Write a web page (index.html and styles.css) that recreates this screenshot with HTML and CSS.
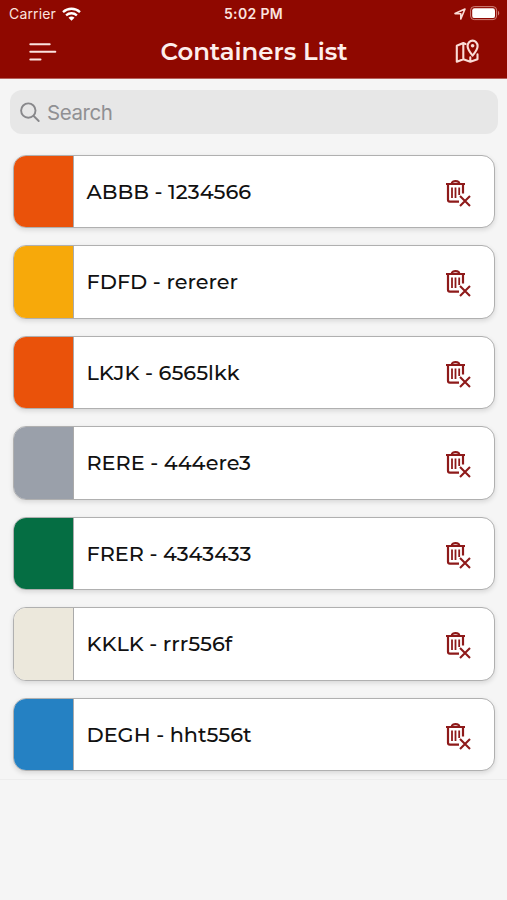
FILE: index.html
```html
<!DOCTYPE html>
<html lang="en">
<head>
    <meta charset="UTF-8">
    <meta name="viewport" content="width=device-width, initial-scale=1.0">
    <title>Containers List</title>
    <link rel="stylesheet" href="styles.css">
</head>
<body>
    <svg class="sprite" width="0" height="0">
        <symbol id="trash" viewBox="0 0 26 28">
            <g fill="none" stroke="#8e1a1a">
                <path stroke-width="2.2" d="M1 5h19M6.8 4.5c0-3.2 7.4-3.2 7.4 0M3 5v15.8c0 1.2.6 1.8 1.8 1.8h9.2M18 5v9.5"/>
                <path stroke-width="1.8" d="M7 8.5v10.5M10.5 8.5v10.5M14.2 8.5v7.5"/>
                <path stroke-width="2.1" d="M15 17l10 10M25 17l-10 10"/>
            </g>
        </symbol>
    </svg>

    <header class="header">
        <div class="status">
            <div class="status-left">
                <span class="carrier">Carrier</span>
                <svg width="19" height="14" viewBox="0 0 19 14">
                    <g fill="none" stroke="#fff" stroke-width="2.3">
                        <path d="M1 5.2c4.8-4.6 12.2-4.6 17 0"/>
                        <path d="M4.1 8.4c3.1-2.9 7.7-2.9 10.8 0"/>
                    </g>
                    <path fill="#fff" d="M9.5 13.8L6.5 10.7c1.7-1.6 4.3-1.6 6 0z"/>
                </svg>
            </div>
            <span class="time">5:02 PM</span>
            <div class="status-right">
                <svg width="12" height="12" viewBox="0 0 12 12">
                    <path fill="none" stroke="#fbdcd6" stroke-width="1.6" stroke-linejoin="round" d="M1 5.6L11 1L6.8 11V5.7z"/>
                </svg>
                <svg width="30" height="15" viewBox="0 0 30 15">
                    <rect x=".6" y=".6" width="26" height="13" rx="3.6" fill="none" stroke="#d08078"/>
                    <rect x="2.2" y="2.3" width="22.8" height="9.8" rx="2.2" fill="#fff"/>
                    <path fill="#d08078" d="M28 4.8c1.7.8 1.7 4 0 4.8z"/>
                </svg>
            </div>
        </div>
        <div class="navbar">
            <svg width="28" height="20" viewBox="0 0 28 20">
                <path stroke="#fbe3df" stroke-width="2" stroke-linecap="round" d="M1.3 2.2h19.4M1.3 9.8h25M1.3 17.4h10.2"/>
            </svg>
            <h1>Containers List</h1>
            <svg width="25" height="25" viewBox="0 0 25 25">
                <g fill="none" stroke="#fbdcd6" stroke-width="2.1" stroke-linejoin="round" stroke-linecap="round">
                    <path d="M10.5 5L8.3 4L1.8 6.8v16l6.5-2.6l7 2.6l7.2-2.6V15.4M8.3 4v16.2M15.3 18.4v4"/>
                    <path d="M17.6 16.6c-2.4-3.2-5-5.8-5-9.6a5 5.4 0 0 1 10 0c0 3.8-2.6 6.4-5 9.6z"/>
                </g>
                <circle cx="17.6" cy="6.8" r="1.8" fill="#fbdcd6"/>
            </svg>
        </div>
    </header>

    <div class="content">
        <div class="search">
            <svg width="21" height="21" viewBox="0 0 21 21">
                <g fill="none" stroke="#88888b" stroke-width="1.9" stroke-linecap="round">
                    <circle cx="8.3" cy="8.6" r="7.2"/>
                    <path d="M13.7 14l5 5"/>
                </g>
            </svg>
            <span>Search</span>
        </div>

        <div class="list">
            <div class="card">
                <div class="color orange"></div>
                <span class="name">ABBB - 1234566</span>
                <svg class="trash"><use href="#trash"/></svg>
            </div>
            <div class="card">
                <div class="color yellow"></div>
                <span class="name">FDFD - rererer</span>
                <svg class="trash"><use href="#trash"/></svg>
            </div>
            <div class="card">
                <div class="color orange"></div>
                <span class="name">LKJK - 6565lkk</span>
                <svg class="trash"><use href="#trash"/></svg>
            </div>
            <div class="card">
                <div class="color gray"></div>
                <span class="name">RERE - 444ere3</span>
                <svg class="trash"><use href="#trash"/></svg>
            </div>
            <div class="card">
                <div class="color green"></div>
                <span class="name">FRER - 4343433</span>
                <svg class="trash"><use href="#trash"/></svg>
            </div>
            <div class="card">
                <div class="color beige"></div>
                <span class="name">KKLK - rrr556f</span>
                <svg class="trash"><use href="#trash"/></svg>
            </div>
            <div class="card">
                <div class="color blue"></div>
                <span class="name">DEGH - hht556t</span>
                <svg class="trash"><use href="#trash"/></svg>
            </div>
        </div>
    </div>
</body>
</html>
```
FILE: styles.css
```css
* {
    box-sizing: border-box;
}
body {
    margin: 0;
    background-color: #f5f5f5;
    font-family: Montserrat, Inter, sans-serif;
}
svg {
    display: block;
    flex-shrink: 0;
}
.sprite {
    display: none;
}
.header {
    height: 79px;
    background-color: #8f0800;
    border-bottom: 1px solid #b5615c;
    color: #fff;
}
.status {
    display: grid;
    grid-template-columns: 1fr auto 1fr;
    align-items: center;
    height: 27px;
    padding: 0 7px;
    font-family: Inter, sans-serif;
    font-size: 14px;
    color: #fbe3df;
}
.status-left, .status-right {
    display: flex;
    align-items: center;
    gap: 6px;
}
.status-left {
    padding-left: 2px;
}
.status-right {
    justify-content: flex-end;
    gap: 4px;
}
.carrier {
    letter-spacing: 0.15px;
}
.time {
    font-weight: 600;
    letter-spacing: 0.35px;
}
.navbar {
    display: flex;
    align-items: center;
    justify-content: space-between;
    height: 49px;
    padding: 0 27px 0 29px;
}
h1 {
    margin: 0 4px 2px 0;
    font-size: 24.4px;
    font-weight: 600;
    color: #fdeeec;
}
.content {
    height: 701px;
    padding: 11px 9px 0 10px;
    border-bottom: 1px solid #ededed;
}
.search {
    display: flex;
    align-items: center;
    gap: 6px;
    height: 43.5px;
    padding: 1px 0 0 10px;
    border-radius: 12px;
    background-color: #e7e7e7;
    font-family: Inter, sans-serif;
    font-size: 20.5px;
    letter-spacing: -0.45px;
    color: #909093;
}
.list {
    display: flex;
    flex-direction: column;
    gap: 17px;
    margin: 21px 3px 0 3px;
}
.card {
    display: flex;
    align-items: center;
    height: 73.5px;
    padding-right: 23px;
    border: 1.5px solid #b0b0b0;
    border-radius: 13px;
    background-color: #fff;
    box-shadow: 0 2px 5px rgba(0,0,0,0.12);
    overflow: hidden;
}
.color {
    width: 60px;
    height: 100%;
    border-right: 1px solid #aaa;
}
.orange {
    background-color: #ea520a;
}
.yellow {
    background-color: #f7a90a;
}
.gray {
    background-color: #9aa0aa;
}
.green {
    background-color: #056e43;
}
.beige {
    background-color: #ece8dc;
}
.blue {
    background-color: #2581c3;
}
.name {
    flex: 1;
    padding-left: 12.5px;
    font-size: 20.8px;
    font-weight: 500;
    color: #111;
    white-space: nowrap;
}
.trash {
    width: 26px;
    height: 28px;
    margin-top: 3px;
}
```
